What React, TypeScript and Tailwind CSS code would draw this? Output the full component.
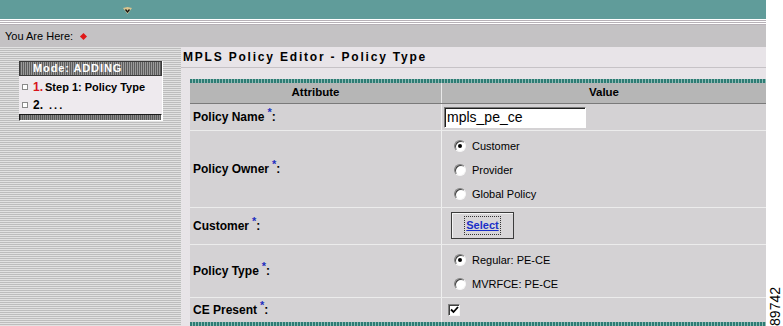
import React from 'react';

function Radio({ checked }: { checked?: boolean }) {
    return (
        <span className="flex h-[12px] w-[12px] shrink-0 items-center justify-center rounded-full border border-t-[#808080] border-l-[#808080] border-b-[#f6f6f6] border-r-[#f6f6f6] bg-white shadow-[inset_1px_1px_0_#404040]">
            {checked && <span className="h-[4px] w-[4px] rounded-full bg-black" />}
        </span>
    );
}

function RadioRow({ label, checked }: { label: string; checked?: boolean }) {
    return (
        <div className="flex h-[24px] items-center pl-[12px]">
            <Radio checked={checked} />
            <span className="ml-[6px] text-[11px]">{label}</span>
        </div>
    );
}

function Label({ text }: { text: string }) {
    return (
        <div className="flex w-[252px] shrink-0 items-center border-r border-[#efefef] pl-[3px] text-[12px] font-bold">
            <span>
                {text}
                <span className="relative top-[-5px] ml-[3px] text-[11px] text-[#1c2fbf]">*</span>:
            </span>
        </div>
    );
}

export default function App() {
    return (
        <div className="flex h-[326px] w-[783px] overflow-hidden bg-white font-['Liberation_Sans',Arial,sans-serif] text-black">
            <div className="flex w-[766px] shrink-0 flex-col">
                {/* top bar */}
                <div className="flex h-[19px] items-start bg-[#609c9a] pl-[123px] pt-[7px]">
                    <svg width="9" height="7" viewBox="0 0 9 7">
                        <path d="M0 1 L4.5 0 L9 1 L4.5 7 Z" fill="#d9c48e" />
                        <path d="M2.5 2.5 L4.5 5 L6.5 2.5" fill="none" stroke="#111" strokeWidth="1.3" />
                    </svg>
                </div>
                <div className="h-[6px] bg-[repeating-linear-gradient(180deg,#ffffff_0px,#ffffff_1px,#b7b1b7_1px,#b7b1b7_2px)]" />
                <div className="flex h-[22px] items-center bg-[#c4c2c4] pl-[5px] text-[11px]">
                    You Are Here:
                    <span className="ml-[8px] h-[5px] w-[5px] rotate-45 bg-[#e01818]" />
                </div>

                <div className="flex min-h-0 flex-1">
                    {/* sidebar */}
                    <aside className="w-[181px] shrink-0 bg-[repeating-linear-gradient(180deg,#e2e2e2_0px,#e2e2e2_1px,#bdbdbd_1px,#bdbdbd_2px)] pl-[19px] pt-[14px]">
                        <div className="w-[144px] border-r border-white">
                            <div className="flex h-[15px] items-center border border-[#3a3a3a] bg-[repeating-linear-gradient(90deg,#5c5c5c_0px,#5c5c5c_1px,#9a9a9a_1px,#9a9a9a_2px)] pl-[13px] text-[11px] font-bold tracking-[0.9px] text-white">
                                Mode: ADDING
                            </div>
                            <div className="h-[38px] bg-[#eeeaee] pl-[3px] pt-[2px]">
                                <div className="flex h-[18px] items-center">
                                    <span className="h-[6px] w-[6px] border border-[#8a8a8a] bg-white" />
                                    <span className="ml-[5px] text-[12px] font-bold text-[#d8141c]">1.</span>
                                    <span className="ml-[2px] text-[11px] font-bold">Step 1: Policy Type</span>
                                </div>
                                <div className="flex h-[18px] items-center">
                                    <span className="h-[6px] w-[6px] border border-[#8a8a8a] bg-white" />
                                    <span className="ml-[5px] text-[12px] font-bold">2.</span>
                                    <span className="ml-[6px] text-[11px] font-bold tracking-[2px]">...</span>
                                </div>
                            </div>
                            <div className="h-[7px] border border-b-white border-l-[#1a1a1a] border-t-[#1a1a1a] border-r-white bg-[repeating-linear-gradient(90deg,#5a5a5a_0px,#5a5a5a_1px,#8c8c8c_1px,#8c8c8c_2px)]" />
                        </div>
                    </aside>

                    {/* main */}
                    <main className="flex flex-1 flex-col bg-[#e8e4e8]">
                        <div className="flex h-[22px] items-center border-b border-[#c6c2c6] pl-[2px] text-[12px] font-bold tracking-[1.8px]">
                            MPLS Policy Editor - Policy Type
                        </div>
                        <div className="ml-[9px] mt-[11px] flex flex-col">
                            <div className="h-[4px] bg-[repeating-linear-gradient(90deg,#2e7c74_0px,#2e7c74_2px,#8dbab4_2px,#8dbab4_3px)]" />
                            <div className="flex h-[21px] border-b border-[#7a7a7a] bg-[#b6b6b6] text-[11.5px] font-bold">
                                <div className="flex w-[252px] items-center justify-center border-r border-[#e8e8e8]">Attribute</div>
                                <div className="flex flex-1 items-center justify-center">Value</div>
                            </div>

                            <div className="flex h-[27px] border-b border-[#ececec] bg-[#d4d2d4]">
                                <Label text="Policy Name" />
                                <div className="flex flex-1 items-center pl-[2px]">
                                    <div className="flex h-[21px] w-[142px] items-center border border-t-[#7a7a7a] border-l-[#7a7a7a] border-b-white border-r-white bg-white pl-[2px] text-[14px] shadow-[inset_1px_1px_0_#202020]">
                                        mpls_pe_ce
                                    </div>
                                </div>
                            </div>

                            <div className="flex h-[77px] border-b border-[#ececec] bg-[#d4d2d4]">
                                <Label text="Policy Owner" />
                                <div className="flex flex-1 flex-col pt-[3px]">
                                    <RadioRow label="Customer" checked />
                                    <RadioRow label="Provider" />
                                    <RadioRow label="Global Policy" />
                                </div>
                            </div>

                            <div className="flex h-[37px] border-b border-[#ececec] bg-[#d4d2d4]">
                                <Label text="Customer" />
                                <div className="flex flex-1 items-start pl-[9px] pt-[4px]">
                                    <div className="flex h-[27px] w-[63px] items-center justify-center border border-[#3c3c3c] bg-[#d8d6d8] shadow-[inset_1px_1px_0_#f4f4f4]">
                                        <span className="border border-dotted border-[#333] px-[1px] text-[11px] font-bold text-[#1a2fc8] underline">
                                            Select
                                        </span>
                                    </div>
                                </div>
                            </div>

                            <div className="flex h-[53px] border-b border-[#ececec] bg-[#d4d2d4]">
                                <Label text="Policy Type" />
                                <div className="flex flex-1 flex-col pt-[3px]">
                                    <RadioRow label="Regular: PE-CE" checked />
                                    <RadioRow label="MVRFCE: PE-CE" />
                                </div>
                            </div>

                            <div className="flex h-[24px] bg-[#d4d2d4]">
                                <Label text="CE Present" />
                                <div className="flex flex-1 items-center pl-[6px]">
                                    <span className="flex h-[12px] w-[12px] items-center justify-center border border-t-[#808080] border-l-[#808080] border-b-[#f6f6f6] border-r-[#f6f6f6] bg-white shadow-[inset_1px_1px_0_#404040]">
                                        <svg width="9" height="8" viewBox="0 0 9 8">
                                            <path d="M1 3.5 L3.5 6 L8 1" fill="none" stroke="#000" strokeWidth="1.8" />
                                        </svg>
                                    </span>
                                </div>
                            </div>
                            <div className="h-[4px] bg-[repeating-linear-gradient(90deg,#2e7c74_0px,#2e7c74_2px,#8dbab4_2px,#8dbab4_3px)]" />
                        </div>
                    </main>
                </div>
            </div>

            <div className="flex flex-1 flex-col items-center justify-end">
                <span className="rotate-180 text-[14px] leading-none [writing-mode:vertical-rl]">89742</span>
            </div>
        </div>
    );
}
